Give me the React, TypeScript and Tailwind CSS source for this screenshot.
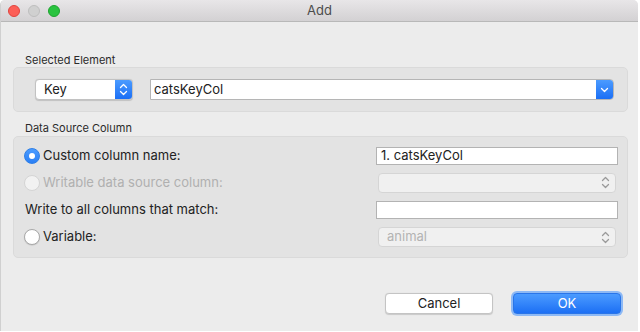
import React from 'react';

function Stepper({ color }: { color: string }) {
  return (
    <svg width="9" height="13" viewBox="0 0 9 13" fill="none">
      <path d="M1.5 4.5L4.5 1.5L7.5 4.5" stroke={color} strokeWidth="1.3" strokeLinecap="round" strokeLinejoin="round" />
      <path d="M1.5 8.5L4.5 11.5L7.5 8.5" stroke={color} strokeWidth="1.3" strokeLinecap="round" strokeLinejoin="round" />
    </svg>
  );
}

function Radio({ state }: { state: 'on' | 'off' | 'disabled' }) {
  if (state === 'on') {
    return (
      <div className="w-4 h-4 rounded-full bg-gradient-to-b from-[#4a9bff] to-[#2a7ff5] border border-[#2f7fe6] flex items-center justify-center shrink-0">
        <div className="w-[6px] h-[6px] rounded-full bg-white" />
      </div>
    );
  }
  if (state === 'disabled') {
    return <div className="w-4 h-4 rounded-full bg-[#f2f2f2] border border-[#d4d4d4] shrink-0" />;
  }
  return <div className="w-4 h-4 rounded-full bg-white border border-[#a9a9a9] shadow-[0_0.5px_1px_rgba(0,0,0,0.15)] shrink-0" />;
}

function DisabledPopup({ value }: { value?: string }) {
  return (
    <div className="mx-[2px] h-5 rounded-[4px] bg-[#f0f0f0] border border-[#d5d5d5] flex items-center justify-between pl-[8px] pr-[5px]">
      <span className="text-[13px] text-[#b3b3b3]">{value}</span>
      <Stepper color="#9a9a9a" />
    </div>
  );
}

export default function App() {
  return (
    <div className="w-[640px] h-[332px] bg-white" style={{ fontFamily: 'Inter, "Noto Sans", sans-serif' }}>
      <div className="w-[638px] h-[331px] bg-[#ececec] rounded-t-[5px] border-l border-[#d0d0d0] flex flex-col overflow-hidden">
        {/* Title bar */}
        <div className="h-[22px] shrink-0 bg-gradient-to-b from-[#e8e6e8] to-[#d3d1d3] border-b border-[#b8b8b8] flex items-center relative">
          <div className="flex items-center gap-[8px] pl-[7px]">
            <div className="w-3 h-3 rounded-full bg-[#fc5f57] border border-[#e0443e]" />
            <div className="w-3 h-3 rounded-full bg-[#d0d0d0] border border-[#bdbdbd]" />
            <div className="w-3 h-3 rounded-full bg-[#29c33f] border border-[#1ea32f]" />
          </div>
          <div className="absolute inset-0 flex items-center justify-center text-[13px] text-[#4c4c4c]">Add</div>
        </div>

        <div className="flex flex-col pl-[12px] pr-[10px]">
          {/* Selected Element */}
          <div className="mt-[32px] pl-[12px] text-[11px] leading-[13px] text-[#2a2a2a]">Selected Element</div>
          <div className="mt-[0px] h-[45px] rounded-[5px] bg-[#e3e3e3] border border-[#dadada] flex items-center pl-[21px] pr-[13px] gap-[17px]">
            <div className="w-[98px] h-[21px] rounded-[4px] bg-white border border-[#c2c2c2] shadow-[0_0.5px_1px_rgba(0,0,0,0.15)] flex items-center overflow-hidden">
              <span className="flex-1 pl-[8px] text-[13px] text-[#222]">Key</span>
              <div className="w-[17px] h-full bg-gradient-to-b from-[#4b9bff] to-[#1a6ef5] flex items-center justify-center">
                <Stepper color="#ffffff" />
              </div>
            </div>
            <div className="flex-1 h-[21px] bg-white border border-[#b5b5b5] flex items-center rounded-r-[4px] overflow-hidden">
              <span className="flex-1 pl-[3px] text-[13px] text-[#222]">catsKeyCol</span>
              <div className="w-[17px] h-full bg-gradient-to-b from-[#4b9bff] to-[#1a6ef5] flex items-center justify-center">
                <svg width="9" height="6" viewBox="0 0 9 6" fill="none">
                  <path d="M1.5 1.5L4.5 4.5L7.5 1.5" stroke="#fff" strokeWidth="1.3" strokeLinecap="round" strokeLinejoin="round" />
                </svg>
              </div>
            </div>
          </div>

          {/* Data Source Column */}
          <div className="mt-[10px] pl-[12px] text-[11px] leading-[13px] text-[#2a2a2a]">Data Source Column</div>
          <div className="mt-[1px] h-[122px] rounded-[5px] bg-[#e3e3e3] border border-[#dadada] pt-[5px] pl-[10px] pr-[9px] flex flex-col">
            <div className="h-[27px] flex items-center">
              <div className="flex-1 flex items-center gap-[3px]">
                <Radio state="on" />
                <span className="text-[13px] text-[#222]">Custom column name:</span>
              </div>
              <div className="w-[242px] h-[18px] bg-white border border-[#b3b3b3] flex items-center pl-[4px] text-[13px] text-[#222]">1. catsKeyCol</div>
            </div>
            <div className="h-[27px] flex items-center">
              <div className="flex-1 flex items-center gap-[3px]">
                <Radio state="disabled" />
                <span className="text-[13px] text-[#b0b0b0]">Writable data source column:</span>
              </div>
              <div className="w-[242px]">
                <DisabledPopup />
              </div>
            </div>
            <div className="h-[28px] flex items-center">
              <div className="flex-1 pl-[1px] text-[13px] text-[#222]">Write to all columns that match:</div>
              <div className="w-[242px] h-[18px] bg-white border border-[#b3b3b3]" />
            </div>
            <div className="h-[26px] flex items-center">
              <div className="flex-1 flex items-center gap-[3px]">
                <Radio state="off" />
                <span className="text-[13px] text-[#222]">Variable:</span>
              </div>
              <div className="w-[242px]">
                <DisabledPopup value="animal" />
              </div>
            </div>
          </div>

          {/* Buttons */}
          <div className="mt-[33px] flex justify-end items-center gap-[18px] pr-[5px]">
            <button className="w-[108px] h-[21px] rounded-[4px] bg-white border border-[#c4c4c4] shadow-[0_0.5px_1px_rgba(0,0,0,0.15)] text-[13px] text-[#222] flex items-center justify-center">
              Cancel
            </button>
            <div className="rounded-[6px] p-[2px] bg-[#8db9f5]">
              <button className="w-[108px] h-[21px] rounded-[4px] bg-gradient-to-b from-[#4b9bff] to-[#1c6ff4] border border-[#2a75e8] text-[13px] text-white flex items-center justify-center">
                OK
              </button>
            </div>
          </div>
        </div>
      </div>
    </div>
  );
}
